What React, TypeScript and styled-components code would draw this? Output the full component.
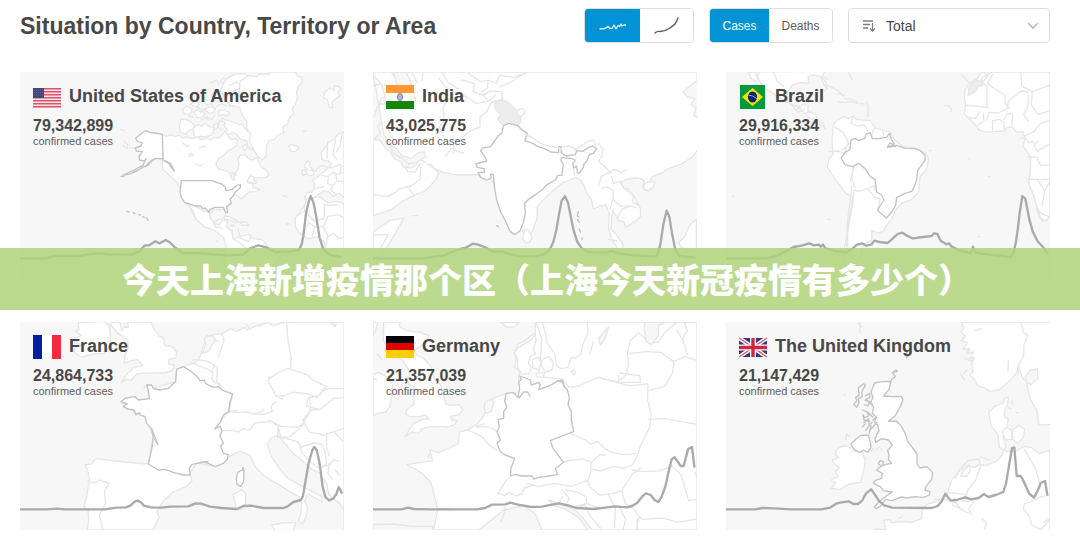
import React from "react";
import styled, { createGlobalStyle } from "styled-components";

const GlobalStyle = createGlobalStyle`
  *, *::before, *::after { box-sizing: border-box; }
  body {
    margin: 0;
    background: #ffffff;
    color: #484848;
    font-family: "Liberation Sans", Arial, "Noto Sans CJK SC", sans-serif;
  }
`;

const Page = styled.main`
  position: relative;
  padding: 8px 30px 28px 20px;
`;

const Header = styled.header`
  display: flex;
  align-items: center;
  gap: 15px;
  height: 35px;
  margin-bottom: 29px;
`;

const Title = styled.h1`
  flex: 1;
  margin: 0;
  font-size: 23px;
  line-height: 34px;
  font-weight: 700;
  white-space: nowrap;
`;

const Toggle = styled.div`
  display: flex;
  height: 35px;
  overflow: hidden;
  border: 1px solid #dedede;
  border-radius: 4px;
`;

const ToggleButton = styled.button<{ $active?: boolean; $width: number }>`
  display: flex;
  align-items: center;
  justify-content: center;
  width: ${(p) => p.$width}px;
  padding: 0;
  border: 0;
  background: ${(p) => (p.$active ? "#0093d5" : "#ffffff")};
  color: ${(p) => (p.$active ? "#ffffff" : "#5c5c5c")};
  font: 400 12px/16px "Liberation Sans", Arial, sans-serif;
  cursor: pointer;
`;

const SelectBox = styled.label`
  display: grid;
  grid-template-columns: 15px 1fr 12px;
  align-items: center;
  gap: 9px;
  width: 202px;
  height: 35px;
  padding: 0 10px 0 13px;
  border: 1px solid #dedede;
  border-radius: 4px;
`;

const Select = styled.select`
  width: 100%;
  padding: 0;
  border: 0;
  background: transparent;
  appearance: none;
  color: #484848;
  font: 400 14px/20px "Liberation Sans", Arial, sans-serif;
`;

const Grid = styled.section`
  display: grid;
  grid-template-columns: repeat(3, 1fr);
  gap: 42px 29px;
`;

const Card = styled.article`
  position: relative;
  min-height: 208px;
  padding: 13px;
  overflow: hidden;
  background: #f7f7f7;
`;

const MapLayer = styled.svg`
  position: absolute;
  inset: 0;
  width: 100%;
  height: 100%;
  stroke-linejoin: round;
  stroke-linecap: round;
`;

const Shape = styled.path<{ $kind: Kind }>`
  fill: ${(p) => ({ land: "#ffffff", sea: "#f7f7f7", line: "none", area: "#ededed", focus: "#ffffff", mark: "none" })[p.$kind]};
  stroke: ${(p) => (p.$kind === "focus" || p.$kind === "mark" ? "#c3c3c3" : "#e6e6e6")};
  stroke-width: 4;
`;

const Curve = styled.path`
  fill: none;
  stroke: #aaaaaa;
  stroke-width: 7;
`;

const CardText = styled.div`
  position: relative;
`;

const CardHead = styled.div`
  display: flex;
  align-items: center;
  gap: 8px;
  height: 24px;
`;

const FlagFrame = styled.svg`
  flex: none;
  width: 28px;
  height: 24px;
`;

const Country = styled.h2`
  margin: 0 0 2px;
  font-size: 18px;
  line-height: 22px;
  font-weight: 700;
  white-space: nowrap;
`;

const Count = styled.p`
  margin: 8px 0 0;
  font-size: 16px;
  line-height: 18px;
  font-weight: 700;
`;

const Caption = styled.p`
  margin: 0;
  font-size: 11px;
  line-height: 12px;
  color: #606060;
`;

const Banner = styled.div`
  position: absolute;
  top: 248px;
  left: 0;
  right: 0;
  display: flex;
  align-items: center;
  justify-content: center;
  height: 62px;
  padding-left: 14px;
  background: rgba(176, 211, 122, 0.85);
  color: #ffffff;
  font-family: "Noto Sans CJK SC", sans-serif;
  font-size: 34px;
  line-height: 48px;
  font-weight: 900;
  white-space: nowrap;
`;

type Kind = "land" | "sea" | "line" | "area" | "focus" | "mark";
type FlagName = "us" | "in" | "br" | "fr" | "de" | "gb";

interface CountryData {
  name: string;
  flag: FlagName;
  cases: string;
  left: number;
  shapes: [Kind, string][];
  curve: string;
}

const countries: CountryData[] = [
  {
    name: "United States of America",
    flag: "us",
    cases: "79,342,899",
    left: 30,
    shapes: [
      // Canada and the Arctic islands
      ["land", "M457 222l12 7 14-5 12 6 12-5 11 9 15-3 13 5 16-4 12 7 17-4 12 5 11-8 12 2 10-9 8-12 9 5 2 14 9 8 11-5 8 8-4 13-14 12-11 3-9 11-20 14-7 18 7 12 17 4 17 9 6 17 9 6-2-17 12-16 3-15-3-17 8-13 15 2 9 10 12 5 12-9 7 15 6 14 14 8 11 16-10 7-26 1-20 4-9 11 14 1 2 13 21 7-17 7-16-1-24 22-16-13-28 1-18-16-13-2H514l-20-27-37-33z"],
      ["land", "M513 177l17 2 14 7 12 12-8 9-13 5-7 10-15-4-6-15zM548 207l14-13 14 4 9-9 9 8 15 7 2 12-9 10-16 5-14-2-16 3zM517 150l12-12 11 4 8 13-11 7-14-1zM551 158l10-9 11 8 7-4 7 10-10 9-13 1zM583 148l18-8 15 6-4 11-17 3zM540 133l15-9 16 5-12 12zM581 126l14-6 11 8-15 7zM610 196l11-6 3 12-9 7zM625 152l18-2 16 8-8 10-15-5-9 6zM604 105l14-12 16 3 8 15-16 14-15-3zM637 78l10-20 25-15 30-2 17 11-13 14-13 6-6 15-15 5-15 13-16-2-10-12zM665 120l14-5 12 7-18 16-16 1zM640 178l12 2 31 12 13 2 16 19 13 4-2 13 16 9 9 13-12 4-8 12-14-11-5-15-18-4-8-13-16-9-7 7-12-2 4-11-10-14 4-8-12-6 2-10zM630 65l11-11 7 7-10 8zM697 260l10-7 6 12-10 6zM712 362l10-16 10 4 1 12 6 3-3 6-9-4-11 2z"],
      ["line", "M560 140l14 10 12-6M588 170l18 8 8-12M600 70l20-10 6 14M620 140l14-9 16 7M650 100l10 12M536 168l16 4M600 130l10 8M575 180l12-6 8 6M630 180l-6 18 12 14M660 76l18-10 14 8"],
      ["land", "M690 64l26-18 23 4 8-8 30 0 5-6h72l11 14 12 1-3 20-9 7-5 17 2 19-6 20-9 10 4 17-13 12-6 19-14 9 4 17-17 6-12 14-15 3-9 16-1 31-10 12-15-11-13-22-12-26 3-19-11-17 1-21-13-15-9-27-26-6-15-15 4-15 16-4 19 3z"],
      // Mexico, Central America, Caribbean
      ["land", "M530 431l26 8 25 14 18 5 4 17 10 15 15 5 8-13 17 0-4 17 17 17 4 22 22-9 24-6 15 13 25 3 19 22 37 12 3 16-16 16-23 37-40 31-61 3-32-50-1-38 8-26-10-31-25-19-31-11-25-21-11-29z"],
      ["line", "M540 437l4 16 16 26M610 488l6 12 20 4M666 507l3 30 17 9 22 19M684 507l6 26 24 12 11-15"],
      ["land", "M640 468l20 2 27 16-8 2-16-8-20-3zM690 486l19 0 9 10-22-1zM663 495h8v4h-8z"],
      // Iceland, Svalbard, Europe and Africa
      ["land", "M836 258l9-4 12 3 10 7-10 10-14 0zM945 96l15-12 14 8-2-14 11 0 11 9-10 9 5 12-14 10-9 8 2 17-9-1-7-23-12-6z"],
      ["land", "M1002 216l-17 6-12 14-18 12-13 18-9 13 4 21 18 3 11 8-8 10-17 15-14 10-11 10-10 5 8 9-1 14-8 13h-15l-6 17 4 9 18-5 14-11 22-15 14 4 14 13 16-9 16 13z"],
      ["land", "M890 303l-7 17 9 8-4 14 12 6 12-5-4-16-10-9 2-13zM876 332l12-4 2 13-11 6z"],
      ["land", "M1002 432l-20-8-29 4-23-18-39 6-6 16-15 24-14 18 0 25 10 19 26 18 34-6 18 17 10 43h48z"],
      ["line", "M860 468l23-15v-19M883 453l32 31 28-10v-41M943 435h40M878 517l20-29 17 14 27-3 12-30 31-5 17 10M914 502l-8 26M940 499l14 30 17-9 14 16 17-4M953 529l-8 33M901 330l15 4 13-17M918 385l23-5M935 347l20 2 14-12 14 5 19-4M955 349l-2 22 16 5 12-14 21 4M969 376l-6 15 16 14M953 245l-2 50M977 238l-8 46 11 15M995 224l-4 32-12 20M933 317l33 7 22-10 14 7M981 362l-5-25M990 342l3-25"],
      ["sea", "M600 459l10-10h36l2 14-8 12-15 3-13 10-12-15z"],
      ["line", "M535 285l9-5 7 6-13 4M569 263l17-5M517 248l13 11 6-4M555 312l15 6 9-5M342 244l12 10-3 12-13-11M359 262l15 4M331 208l12 4M665 338l14 8M819 407l10 3M830 492h8M618 544h5M716 265l10 5M880 213h10"],
      ["focus", "M457 223l-24-4-14-2-13-5-17 13-12 9 4 9 15 6-3 9-17 6 3 9 18 2-10 14 1 11 15 3 5-7-9 20-24 13-24 11-12 5 18-2 23-10 22-13 12-4 11-15 13-6 14 1 7 0z"],
      ["mark", "M457 298l24 12 12 24-12-21-20-12M333 350l9-2M370 337l10-5M406 320l10-12 10-7M421 307l12-9M467 303l16 12 9 15M480 318l12 13"],
      ["focus", "M514 362H605L622 368 636 372 646 382 648 392 668 388 680 376 692 374 690 385 676 396 670 408 660 418 664 430 650 440 653 458 646 456 640 442 615 442 600 448 597 456 585 444 578 446 572 438 556 438 540 432 524 428 514 412 510 398 512 380Z"],
      ["mark", "M350 455l7 1M369 458l6 3M387 464l4 1M398 470l5 2M409 474l6 7"],
    ],
    curve: "M30 595H105L140 587 205 588 235 583 263 580 300 583 365 584 388 574 405 556 418 556 436 544 449 550 467 540 478 546 495 562 518 579 555 579 595 582 655 586 700 584 722 564 745 556 768 562 795 576 835 575 867 570 875 553 880 528 888 460 896 426 902 408 910 426 918 466 929 534 940 568 958 584 993 591",
  },
  {
    name: "India",
    flag: "in",
    cases: "43,025,775",
    left: 33,
    shapes: [
      ["land", "M33 36h972v25l-42 34 13 16 24 5-14 18 16 10-6 22 19 13-2 17 7 22-7 42-21 31-36 22-41 15-14 11-29 10-9 16 10 10-5 12-18 4-9-13 6-15-11-7-18-2-25 4-17 11 8 15 33 25 9 19 9 16 1 25-14 13-31 21-5-17-17-6-10-19-7-10-3 30-2 27 13 12 21 30 4 23-19-9-17-27-9-30 1-48-9-24-18 3-19 9-7-28-14-20-8-23-12-18-15-5-38 16-26 22-35 32-14 16-1 35-12 38-14 19-14-12-20-54-22-49-5-42-25 10-24-22-22-17h-82l-43-8-25-12-9-12-26 7-12-5-19-19-26-2-31-29-12-21-16-18z"],
      ["land", "M33 240l20 0 12 17 20 20 13 20 19 9 7 15 24 3 13-10 14-15 12 6 25 18 18 15-9 22-16 17-19 18-31 11-36 19-31 24-55 18z"],
      ["line", "M33 404l44 6 22-12 13-12 36-8 26-20 2-37M130 320l6 14 24 2 14-25M136 378l20 30M33 240l22-20-8-20 12-14M72 196l14 32 20 23M250 290l18-25 38 16M244 230l-12-30 15-18-4-40 20-28 48-4 32 20 36-6 22-18M276 280l0-26 44-38 34-16 0-28 22-20 12-24 14-6M230 55l20 25 22 16 35 12M240 38l17 28 34 22M300 60l38 11-5 24 28 10 17-9M320 40l34 24 25-3-3 23-18 13M380 60l23 10 10-24 41 6 38-13M413 80l34-14 43-27M378 122l-14-15 20-14 35 2 3 20M416 120l20 4M90 40l28 32 31-10M33 44l26 30 13 47-25 18-11 31M150 37l14 30M182 38l-2 24M33 78l20-6"],
      ["sea", "M95 37h38l16 36 12 49-12 15-33-24-9-29zM60 112l25 8-9 14-25-4zM83 256l18 8 20 24 26 7 25-18 14-2 6 14-28 18-24 5-18-16-28-16z"],
      ["area", "M398 124l22-5 24 13 27 27 6 26-9 10-28-5-19 4-14-16 9-14-16-17z"],
      ["land", "M466 150l15-5 10 12-15 14-11-9zM33 516l50-35 42-6-26 47-31 50-35 27zM487 510l11-2 12 24-6 15-14 2-8-14zM845 374l12-8 22-1-4 14-16 14-12-7zM1003 478l-20 18-16 35-18 18 10 14 28 10 16-9z"],
      ["line", "M712 372l5-23 25-11M740 340l16-12 22 10 16-8M748 350l7 20 20-6 11 20 15 3M718 386l15-6 20 11 1 28 22 20 23-2 22 6M782 446l-12 18-2 22M782 446l20-6M796 387l18 18-2 22 20 10M638 345l-5-20M710 250l13 18-5 24-9 12 18 14 20 22M33 526l46-3-26 46M752 418l-8 28M741 538l24 5M150 467l16 0"],
      ["focus", "M424 198L440 190 466 196 478 208 496 220 488 242 512 250 528 260 548 266 566 276 590 278 590 260 597 260 598 278 606 284 612 288 640 284 644 272 662 274 680 262 692 258 704 266 694 280 682 284 674 304 666 312 664 322 652 340 646 338 644 318 636 324 632 312 640 300 630 296 600 292 596 300 604 312 600 346 588 346 580 360 552 376 544 386 520 404 500 418 488 430 490 460 484 488 474 512 458 524 444 514 432 486 416 456 404 420 398 386 394 344 386 342 388 354 374 360 356 352 348 338 368 336 366 326 346 322 342 312 362 306 374 304 370 292 356 272 362 264 386 260 408 228 420 218Z"],
      ["line", "M488 224l18 6 30 20 28 9 26 4 12 10M604 262l14-4 18 6 4 10M640 268l16-8 20-16 18-4 8 14-4 10"],
      ["mark", "M649 455l-3 13 5 3M647 479l4 8M652 507l3 9M660 534v5M404 497l5 3"],
    ],
    curve: "M33 595H190L215 590 247 586 270 576 295 567 310 564 332 551 348 554 370 562 390 574 420 574 440 582 475 589 520 589 549 582 564 568 574 546 583 510 591 463 599 422 609 409 618 428 634 508 646 546 660 566 682 577 730 577 750 573 772 580 805 585 880 590 888 582 896 548 904 493 914 452 922 470 930 520 940 570 952 588 997 593",
  },
  {
    name: "Brazil",
    flag: "br",
    cases: "29,916,334",
    left: 33,
    shapes: [
      ["land", "M100 36l8 18 17 12 5-30zM119 36l25 45 44 28 30 19 36 15 24 26 18 15 24 12 11 10-5-14-18-11-6-19-24-8 2-17-19-3-16 15-27-24-4-24 20-28 26-5 23 2-4-20 17-5 21 4 9 23 10 16-3-20-11-16 7-18z"],
      ["line", "M175 36l12 28 20 16M236 144l14 12 19-7M266 162l20-8M292 174l10 8M326 74l18 5 26 13 16 17M330 92l-10-2M368 100l20 6M372 126l18 2M390 116l28 4 12 10-26-5-10 2M438 130l10 2M456 126l4 20-2 24M400 38l12 20M330 50l8 9M700 136l10 12-4 8M690 136l6 2M643 272h4M820 350h4M338 478h7M53 409h4M760 296h3M790 530h3M740 46l20 20"],
      ["land", "M355 192l15-14 15-8 15 6 15-7 10 10 40 3 17 22 22 7 21 5 13 23 25 20 35 4 34 17 9 15-6 32-20 24-4 46-22 22-29 11-17 18-11 27-19 23-7 15-16 6-19-8-1 31-21 9-9 14-6 30-22 28 5 34 23 26 20 11-35-4-30-35-6-45 0-49 9-45 8-46 10-57-23-13-33-43-23-37 4-21 13-17-3-38z"],
      ["line", "M405 365l12-44M410 380l-4 40-6 42-4 44-1 54M417 390l15 4 26-8 20-9 3 12M417 391l-9 57-11 60 2 60M388 280l-20-7-27 2M388 280l12-33-14-28-27-19M415 169l-7 20 20 9 21-4 9 20M478 205l-9 22M504 212l3 22M530 218l-4 12M382 270l22-20M413 320l-2 36 9 27M456 386l22 23 17 8-6 30M420 588l20 4"],
      ["land", "M1005 36H800l-15 22-20 10-14 20-3 22 4 25-4 28 13 11 18 17 12 18 22 8 24-2 30-2 10-11 14-2 16 18 16-4 8 20-8 24 14 18 10 15-1 42-5 38 10 23 14 42 15 47 14-2 11-14zM1005 470l-22-7-20-19 14 32 17 6z"],
      ["line", "M765 68h36l15 10v65M820 73l52 35-2 17 11 20M801 68v-15l30-17M801 36l19 10-19 23M832 43l-14 28M917 36l4 43 31 16 53-20M952 95l-3 40 20 28 36-11M881 123l38-30 20 3M881 123l-4 23-27 13-28-2-7 24M754 136l36 3 30 4M762 172l20 3 13-20M790 195l16-13v-22M833 213l-1-30 20-5 15 8 0 23M867 178l10-18 16 4M893 164l-2 31M941 106l-3 35-12 22 15 22M932 227l25-12 19-25 29-8M917 235l13-2 10 14 13-3 14 31 38-24M968 244l-11 12M939 290l28 3 10 24 28-3M935 358h70M968 360l21 33 16-30M989 393l-8 45"],
      ["area", "M777 61l24 2 2 14-15 1-2 12-14 10-13 7 3-24z"],
      ["focus", "M378 294L390 278 405 268 408 240 420 235 430 242 448 236 454 222 466 218 472 236 490 236 514 232 524 220 530 240 538 250 524 262 545 256 570 265 600 266 616 272 630 286 630 300 608 332 605 358 600 376 590 394 570 400 545 413 542 436 530 456 514 474 500 462 487 450 507 420 500 405 485 396 480 358 466 350 450 326 432 310 412 320 390 314Z"],
      ["mark", "M517 262l7-13 13 5 5 6-13-3z"],
    ],
    curve: "M33 595H155L185 588 207 577 236 561 263 556 282 550 298 556 312 554 318 560 324 554 332 566 347 568 360 573 395 577 412 566 426 554 441 550 454 557 470 553 478 542 493 546 518 549 537 532 548 522 562 518 574 526 593 535 625 531 650 528 657 520 667 522 677 542 694 553 702 550 710 560 738 573 767 580 774 560 781 578 820 584 865 588 886 592 896 577 902 550 908 510 914 459 922 408 931 416 943 478 954 517 968 544 988 566 997 580",
  },
  {
    name: "France",
    flag: "fr",
    cases: "24,864,733",
    left: 30,
    shapes: [
      ["land", "M205 38l2 22-11 4 19 12-21 8 8 14 14 8-18 4-5 15 10 9 14 7 22-6 20-4 23 0 17-20 2-31-3-32-16-14zM300 42l12-6 18 2 5 24 8-11 12 1-2-16h70l10 23 14 18 14 8 3 20 22 5 14 16-2 17-22 6 0 14 17 2-6 17-21 7h-57l-29 3-16 18-14-2-15 9 14-22 23-23 27-5-17-18-15 2-24 8 1-20 11-25-2-24-17-12-12-8z"],
      ["land", "M1002 660V36H850L808 40 790 48 778 38 740 46 712 60 704 52 680 64 662 56 640 70 612 74 590 88 576 116 570 142 556 158 530 166 500 178 497 215 428 235 410 225 418 266 333 275 378 312 405 320 430 378 415 462 340 456 258 446 244 462 226 464 234 484 238 510 230 560 222 590 234 600 236 630 232 660H428L448 620 440 606 460 572 490 546 528 530 546 512 540 490 560 458 615 470 655 440 690 424 720 436 736 470 760 496 800 520 840 545 866 560 876 580 872 612 864 632 878 642 890 616 892 590 884 572 894 552 936 576 936 560 880 530 832 504 812 480 784 440 772 400 786 382 806 376 822 398 850 430 874 450 906 478 930 490 950 520 956 552 972 568 990 580 1002 600Z"],
      ["line", "M545 157l20 10 30 12 14 10-4 15 9 14 14 3 7 12M548 150l20 0 26 4 19 11-7 17M629 232l-9-20 2-36-9-11M668 250l-10 53 21 5 32-2 20 5 31 2 25-9-4-15 15-14M778 200l-4 10 22 46 22 12M778 206l22-15 32-16 13 4 47 15 14 14 30 15 16 7-32 32-26-10-44-6-27 12-16-2M841 178l3-32-9-48-5-55M727 312l23-5 12-10M627 350l-14-6 20-12 19-24 28-6M636 362l33 0 16 4 14-10 19 5 17-22 48-5 32 15 48 3 19-14 20-38-2-34M777 330l27 18 8 33M804 348l-2 34 36-2 27-21 19-20-4-10 21-28 31-4 40-32 30-2M878 330l21 37 23 3 18 6 25-9 37-12M808 382l30 5 24 8 10 16 38-12 24 3 12 24 4 33-14 12 22-6 14-16 15 5M866 398l9 30 31 33 18 11M950 369l-1 40 9 28M958 460l-4 30 14 17M975 480l14 15M972 365l26 28M936 241l28-5 38 0M942 234l-13 22-36 8-3 25 39 10M233 515l22 3 13-8 30 10-15 22 4 40-19 33 10 44M636 72l6 20-17 48M605 75l-13 12 2 15-17 26M605 90l22 5"],
      ["land", "M686 545l8-6 12 9 2 28-9 20-21 4-4-28-5-18zM785 645l42-7 30 0-6 23h-56z"],
      ["sea", "M590 78l18 0 9 12-10 14-9 18-20 8 10-27-5-14zM960 36h20l-5 14z"],
      ["line", "M405 228l-3 8M720 58l-10-14M740 46l10 3 10-10"],
      ["focus", "M500 178L520 170 545 185 565 203 570 212 583 210 586 220 600 228 612 232 625 230 640 242 668 252 660 275 656 305 640 315 632 335 614 357 630 348 636 362 630 378 640 400 632 408 640 430 655 433 652 448 640 460 615 470 595 460 590 455 575 457 545 464 538 475 540 495 520 495 490 487 465 478 445 480 425 468 415 462 420 440 427 405 430 378 424 355 410 340 405 320 392 315 388 308 378 314 372 300 352 297 340 289 352 282 333 275 346 264 375 260 385 270 418 266 415 240 410 225 425 225 430 236 450 240 475 235 497 215Z"],
      ["focus", "M679 506l4-19 14-7 2-8 3 6-1 36-9 15-11-5z"],
      ["mark", "M426 358l8 22 10 24-10-15M570 457l24-2-5 5"],
    ],
    curve: "M30 598H110L140 596 165 598H285L320 593 348 592 362 586 374 575 383 572 393 577 402 587 423 592 455 593 480 590 535 589 557 580 573 581 600 590 635 594 680 597 700 588 723 587 760 594 820 594 833 589 850 576 873 570 879 558 886 516 896 459 907 420 913 411 920 420 928 455 938 530 946 561 957 571 970 566 979 552 986 531 995 548",
  },
  {
    name: "Germany",
    flag: "de",
    cases: "21,357,039",
    left: 33,
    shapes: [
      ["land", "M65 36h50l-3 14 23 12 39 5 27 10-10 23-26 15-10 10 14 13 15 6 24 28 9 35 18 17 8 27 8 31 18 4 22-2 12 15-12 14-26 6 4 12 16 0-6 12-20 8-26-2-30 1-23 6-12 14-18-4-20 14 12-22 14-18 25-12 21-2-13-11-17 5-25 0-15-7 2-13 23-18-4-24 6-26-18-8-7-17 12-20-18-26-9-15-22-5-10-28-8-22-15 3z"],
      ["land", "M33 195l18-8 24 14 16 24-1 34-7 31-12 16-24 4-14 7zM33 36h15l-9 30-6 10zM415 37l20 14 20 0 16-13z"],
      ["land", "M1005 660V36H676L678 70 664 100 656 134 640 144 628 142 618 172 598 176 584 168 578 130 556 100 548 60 540 36H522L540 90 530 200 600 208 622 232 650 228 680 214 712 202 730 208 766 216 792 196 800 160 796 130 804 92 830 68 866 100 890 96 906 70 930 48 944 36H520V70L504 78 490 92 470 102 458 120 462 150 458 172 474 184 470 200 476 250 432 250 400 262 372 282 366 318 344 344 316 360 292 366 290 400 262 414 228 428 204 418 212 452 134 464 160 478 180 490 206 516 218 560 228 598 214 660H350L400 620 424 600 450 594 486 588 520 612 536 650 540 660H676L650 622 610 598 574 586 560 570 590 580 640 600 668 630 690 660Z"],
      ["line", "M316 360l25 10 21 12 20 24 22 15M342 352l28-2 22 5 17 14M345 348l22-6M610 365l27 10 36 16 12 12 21-9 23 22 20 12 38 6 33-4M716 204l86 23 56-5-1 50 10 40-4 40-29 60-9 28M825 440l-14 25-26 10-30-6-40 14-29-6 2-20 24-22 18 0M604 455l55-9 31 11M688 478l-10 32-48 19-54-9-46 9-36-9M445 500l-12 10-25 40 20 6 14-9 18 11 19-6 8-18 28-9M600 540l22 25-9 20 32 12 29-16-2-21-26-14-36-6M676 510l6 20 30 25 40-4 26-8 34-52 25-18M810 480l33 5 48-2 40-14 26 25 23 78 22-3M780 545l10 37 24 12 16 25-6 38M823 610l17 18 63-4 44 13 58-10M825 628l2 30M860 328l48-3 62 12 35 6M803 130l52-5 44 3 37 28-4 32-25 42-44 11M932 155l38-15 35 12M960 90l16-28-9-24 38-2M944 60l18 30 14 44M768 195l4 22 64 0-3-20-60-8M600 560l-10 23 35 10 51-12 36 14 60-6 19 40-8 30M667 580l16 36 32 38M740 555l20 40-2 57M230 595l32 0M430 590l-6 28-8 18M1000 488l5 15"],
      ["sea", "M848 36h66l-24 10-1 31-20 27-16-9-6-37zM710 87l18-24 12-12-12 36-13 18zM370 276l16-8 10 8-8 28-16 6-6-16zM33 644l60-2 58 7 60 0v14H33z"],
      ["land", "M520 72l2 20-9 27 8 12-17 10-5 18 10 14-8 18-22 2-12-20 0-24-10-20 12-16 20-12 20-12zM511 150l17-9 9 16-6 22-18-5zM540 150l20-10 14 16-4 24-21 6-10-18zM521 190l27-2-5 14-18-2z"],
      ["focus", "M473 236L470 214 478 210 474 198 505 210 508 225 530 217 535 225 530 238 550 232 565 226 585 214 602 210 606 228 616 240 622 262 618 285 628 305 628 330 635 365 600 378 565 392 573 415 590 438 605 457 590 468 580 476 587 494 560 498 530 502 515 507 510 498 480 498 462 494 445 497 447 475 458 445 430 435 415 425 405 400 415 390 405 365 412 350 408 328 425 325 425 305 435 290 428 275 432 250 455 248 468 262Z"],
      ["mark", "M471 264l14-18 12 0 7 12M586 212l15 5 6 13"],
      ["line", "M628 184l9-4 4 9-7 6zM60 150l-14-18M105 90l-20 20 14 8M76 83l8 17M33 205l10 4M203 430l-4 12M684 130l10-34"],
    ],
    curve: "M33 598H118L138 593 155 597 205 598H345L370 594 390 584 430 583 445 578 468 584 508 591 540 590 570 584 592 580 618 586 645 594 695 597 735 592 758 589 795 592 810 588 826 578 840 560 852 550 866 555 878 570 889 576 899 560 910 530 920 484 929 448 938 442 948 456 956 468 965 468 978 418 990 411 997 470",
  },
  {
    name: "The United Kingdom",
    flag: "gb",
    cases: "21,147,429",
    left: 33,
    shapes: [
      ["land", "M740 36l6 19-9 10 14 14-9 14 15 5-12 19 20 0-10 14 20-5-9 20 12-4-8 21 4 21-10 12 15 12 8 19 26 9 13 9 27-6 32-28 18-20 8-22 6 20 8 18 10 6 2 18 9 36 20 36 6 42 34-2 8-30 36-4V36z"],
      ["line", "M918 38l8 30 13 8-12 28-1 32-18 34 2 24M880 152l-1 30"],
      ["sea", "M930 201l17-21 21-3 0 28-18 18-13-5z"],
      ["land", "M1005 422l-33 8-24-18-21-2-29 16-25-3-20-10-4-40-21-26-7-40 19-18 24-10 6-15 10-2-2 23-9 16-2 18 13 9-5 24-12 16 3 18 7 25-8 11-3 14-17 17-31 14-19-3-17 8-22-5-25 18-20 24-14 40-8 14-20 10-32 10-14 14-3 28-29 12-24-2-37 3-4-10-21 3 5 15 2 14-25-3-25 6-4 16H480l-5 9h530z"],
      ["land", "M862 366l13-14 16 10-1 26-19 2zM893 360l20-14 16 12-4 25-17 18-15-14zM373 411l20-3 14 6 9 11 22-4 13 29-4 29-11 38-35 5-25 17-27-4 13-16-13-9 20-10-8-14 14-14-13-6-10-15 18-9-10-11 6-13z"],
      ["line", "M722 505l12-27 26-27 32-4 5 21-16 44-24 31-6 30M746 480l-9 18 17 2 12-18-3-17-13 14M797 440l26 10M704 547l43 6 30 22-15 20 6 20M660 568l55 2 25 30 20 10M740 572l22 4M800 625l14 12-6 24M928 418l18 30 17 32 14 53M928 582l53-22 24-6M928 582l-3 15 18 22 8 26 26 14 28-29M986 638l19-12M720 565l-8 20 30 14M430 40l9 8-6 10 4 10M435 38v16M387 254h4M405 380l-10-8-3 17M482 420l12-10 6 10M552 625l8-4M475 415l-6 8M750 210l-14-17M746 190l10-10M744 82l-6 12M742 116l24 6M780 60l20-4M750 145l22 9M889 274l4 8M880 292l8 3M905 308h5"],
      ["focus", "M479 219L500 215 528 214 522 238 506 258 530 260 558 259 564 268 556 290 540 318 520 334 545 333 560 350 572 374 578 395 592 412 606 432 606 462 614 474 636 470 653 488 650 508 632 530 630 540 645 545 642 556 624 562 600 560 575 564 560 561 530 572 512 568 495 590 484 596 478 590 496 572 514 558 532 546 505 542 496 530 475 520 480 512 500 505 502 490 484 480 496 470 510 464 530 460 520 448 522 434 518 422 532 405 520 390 500 386 482 397 480 385 492 362 488 346 478 336 484 322 472 310 476 290 466 280 474 262 468 246Z"],
      ["focus", "M408 401l18-16 12-9 22-1 7 25 0 15-9 11-13-6-10 8-13-6-10-12z"],
      ["mark", "M430 233l16-12 5 5-11 20 2 13-12 7 2 12-7 14-9-9 9-10-3-11 10-6zM451 258l13-8 1 12-15 8 14 5-5 13-10-4M443 300l12 5 7 13-12 5-6-8 3 15 17 4M446 338l15-12 1 20M452 362l13-19 7-6M468 346l-5 23M486 337l-18 20M474 330l9-9M460 276l12 8M459 307l14 14M442 350l9-9M531 189l12-9 4 4-14 4 8 12-10 7-6 10M575 124v22M571 138l8 2M496 466l-6-5 6-9 9 3-2 10"],
    ],
    curve: "M33 598H120L142 594 178 595 230 598H320L345 593 363 581 380 577 401 574 415 582 429 582 442 571 453 550 469 538 477 550 493 574 508 586 532 593 650 594 668 588 680 574 691 551 700 563 708 572 725 570 750 562 768 568 791 564 807 552 820 561 842 555 865 546 873 521 881 473 891 414 898 412 905 498 917 498 924 510 942 550 957 563 967 545 977 519 990 513 997 554",
  },
];

const flagArt: Record<FlagName, React.ReactNode> = {
  us: (
    <>
      <path d="M0 4h28v20H0z" fill="#f4e5e9" />
      <path d="M0 4.8h28M0 7.8h28M0 10.8h28M0 13.8h28M0 16.8h28M0 19.8h28M0 22.8h28" stroke="#dc5268" strokeWidth="1.6" />
      <path d="M0 4h11v10H0z" fill="#46467f" />
      <path d="M1 6h9M1 8.5h9M1 11h9" stroke="#6c6c9e" strokeWidth="0.8" strokeDasharray="1 1" />
    </>
  ),
  in: (
    <>
      <path d="M0 1h28v24H0z" fill="#ffffff" />
      <path d="M0 1h28v8H0z" fill="#ff9933" />
      <path d="M0 17h28v8H0z" fill="#138808" />
      <ellipse cx="14" cy="13" rx="2.6" ry="3.6" fill="#b1b1dc" stroke="#8080bd" />
    </>
  ),
  br: (
    <>
      <path d="M1 1h25v24H1z" fill="#009b3a" />
      <path d="M3 13L13.500 4 24 13 13.500 22z" fill="#fedf00" />
      <ellipse cx="13.500" cy="13" rx="4.600" ry="5.500" fill="#002776" />
      <path d="M9 11q5 0 9 4" fill="none" stroke="#8fa6c4" />
    </>
  ),
  fr: (
    <>
      <path d="M0 1h28v24H0z" fill="#ffffff" />
      <path d="M0 1h9v24H0z" fill="#00209f" />
      <path d="M19 1h9v24h-9z" fill="#f42a41" />
    </>
  ),
  de: (
    <>
      <path d="M0 2h28v8H0z" fill="#000000" />
      <path d="M0 9h28v8H0z" fill="#dd0000" />
      <path d="M0 16h28v8H0z" fill="#ffce00" />
    </>
  ),
  gb: (
    <>
      <path d="M0 4h28v19H0z" fill="#2f397f" />
      <path d="M0 4l28 19M28 4L0 23" stroke="#ffffff" strokeWidth="4" />
      <path d="M0 4l28 19M28 4L0 23" stroke="#dd5a6c" strokeWidth="1.400" />
      <path d="M14 4v19M0 13.500h28" stroke="#ffffff" strokeWidth="6" />
      <path d="M14 4v19M0 13.500h28" stroke="#d62340" strokeWidth="3.400" />
    </>
  ),
};

function CountryCard({ data }: { data: CountryData }) {
  return (
    <Card>
      <MapLayer viewBox={`${data.left} 36 972 624`} preserveAspectRatio="xMidYMid slice" aria-hidden="true">
        {data.shapes.map(([kind, d], i) => (
          <Shape key={i} $kind={kind} d={d} />
        ))}
        <Curve d={data.curve} />
      </MapLayer>
      <CardText>
        <CardHead>
          <FlagFrame viewBox="0 1 28 24" aria-hidden="true">
            {flagArt[data.flag]}
          </FlagFrame>
          <Country>{data.name}</Country>
        </CardHead>
        <Count>{data.cases}</Count>
        <Caption>confirmed cases</Caption>
      </CardText>
    </Card>
  );
}

export default function App() {
  return (
    <>
      <GlobalStyle />
      <Page>
        <Header>
          <Title>Situation by Country, Territory or Area</Title>
          <Toggle>
            <ToggleButton type="button" $active $width={55} aria-label="Daily trend" aria-pressed="true">
              <svg width="28" height="12" viewBox="0 0 28 12" fill="none" stroke="#e3f4fc" strokeWidth="1.300" strokeLinecap="round" strokeLinejoin="round">
                <path d="M1 9l5-.5 3-2 2 2h2l2-3.500 2 4 2-3.500 1.500 1L22 4l1 2 3-1.500.500 1" />
              </svg>
            </ToggleButton>
            <ToggleButton type="button" $width={53} aria-label="Cumulative trend" aria-pressed="false">
              <svg width="26" height="18" viewBox="0 0 26 18" fill="none" stroke="#5c5c5c" strokeWidth="1.400" strokeLinecap="round">
                <path d="M1 16q2-2 5-1.500Q12 14 16 11T21 7Q23 4 24 1" />
              </svg>
            </ToggleButton>
          </Toggle>
          <Toggle>
            <ToggleButton type="button" $active $width={59} aria-pressed="true">Cases</ToggleButton>
            <ToggleButton type="button" $width={63} aria-pressed="false">Deaths</ToggleButton>
          </Toggle>
          <SelectBox>
            <svg width="15" height="14" viewBox="0 0 15 14" fill="none" stroke="#808080" strokeWidth="1.300" aria-hidden="true">
              <path d="M1 2h10M1 5.500h7M1 9h5M10.500 4v8M8 9.500l2.500 2.500L13 9.500" />
            </svg>
            <Select aria-label="Sort by" defaultValue="Total">
              <option>Total</option>
            </Select>
            <svg width="12" height="8" viewBox="0 0 12 8" fill="none" stroke="#bcbcbc" strokeWidth="1.600" aria-hidden="true">
              <path d="M1 1l5 5 5-5" />
            </svg>
          </SelectBox>
        </Header>
        <Grid>
          {countries.map((c) => (
            <CountryCard key={c.name} data={c} />
          ))}
        </Grid>
        <Banner>今天上海新增疫情那个区（上海今天新冠疫情有多少个）</Banner>
      </Page>
    </>
  );
}
